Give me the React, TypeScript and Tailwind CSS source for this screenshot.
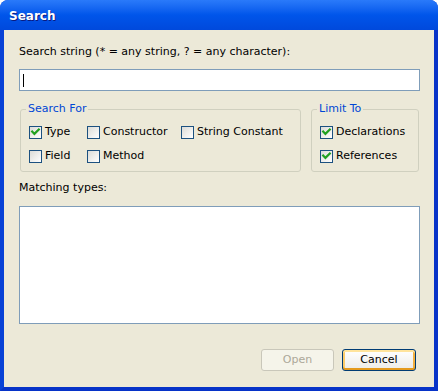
import React from "react";

const F = "font-['DejaVu_Sans',sans-serif]";

function Box({ checked }: { checked?: boolean }) {
  return (
    <span className="w-[13px] h-[13px] border border-[#1C5180] bg-linear-to-br from-[#DCDCD7] to-white flex items-center justify-center shrink-0">
      {checked && (
        <svg width="11" height="11" viewBox="0 0 11 11">
          <polyline points="2.2,4.6 4.4,6.9 8.8,2.5" stroke="#21A121" strokeWidth="2.2" fill="none" strokeLinecap="square" />
        </svg>
      )}
    </span>
  );
}

function Check({ label, checked }: { label: string; checked?: boolean }) {
  return (
    <div className="flex items-center gap-[3px] h-[14px]">
      <Box checked={checked} />
      <span className="leading-[14px]">{label}</span>
    </div>
  );
}

export default function App() {
  return (
    <div className={`w-[438px] h-[391px] bg-white ${F} text-[11px] text-black`}>
      <div className="w-full h-full flex flex-col rounded-t-[8px] overflow-hidden bg-[#0842D6]">
        {/* Title bar */}
        <div className="h-[30px] shrink-0 flex items-center pl-[9px] pt-[1px] bg-linear-to-b from-[#2A7AFA] via-[#0055EA] to-[#0049DC]">
          <span className="text-white font-bold text-[12px] leading-[14px] [text-shadow:1px_1px_0_#0A1A80]">
            Search
          </span>
        </div>
        {/* Frame + body */}
        <div className="flex-1 flex border-l-[4px] border-r-[5px] border-b-[4px] border-l-[#0842D6] border-r-[#0733C8] border-b-[#0733C8]">
          <div className="flex-1 flex flex-col bg-[#ECE9D8] pl-[15px] pr-[14px]">
            <div className="mt-[15px] leading-[14px]">Search string (* = any string, ? = any character):</div>
            <div className="mt-[10px] h-[22px] border border-[#7F9DB9] bg-white flex items-center pl-[3px]">
              <span className="w-[1px] h-[13px] bg-black" />
            </div>

            <div className="mt-[11px] flex gap-[10px] pl-[1px] pr-[1px]">
              <fieldset className="w-[281px] border border-[#D0D0BF] rounded-[3px] px-[8px] pt-[9px] pb-[8px]">
                <legend className="ml-[-3px] px-[2px] leading-[14px] text-[#0046D5]">Search For</legend>
                <div className="flex flex-col gap-[10px]">
                  <div className="flex">
                    <div className="w-[58px]"><Check label="Type" checked /></div>
                    <div className="w-[94px]"><Check label="Constructor" /></div>
                    <div><Check label="String Constant" /></div>
                  </div>
                  <div className="flex">
                    <div className="w-[58px]"><Check label="Field" /></div>
                    <div className="w-[94px]"><Check label="Method" /></div>
                  </div>
                </div>
              </fieldset>
              <fieldset className="w-[108px] border border-[#D0D0BF] rounded-[3px] px-[8px] pt-[9px] pb-[8px]">
                <legend className="ml-[-3px] px-[2px] leading-[14px] text-[#0046D5]">Limit To</legend>
                <div className="flex flex-col gap-[10px]">
                  <Check label="Declarations" checked />
                  <Check label="References" checked />
                </div>
              </fieldset>
            </div>

            <div className="mt-[9px] leading-[14px]">Matching types:</div>
            <div className="mt-[11px] h-[118px] border border-[#7F9DB9] bg-white" />

            <div className="mt-[25px] flex justify-end gap-[8px] pr-[4px]">
              <div className="w-[73px] h-[22px] rounded-[3px] border border-[#C9C7BA] bg-[#F5F4EA] text-[#ACA899] flex items-center justify-center">
                Open
              </div>
              <div className="w-[74px] h-[22px] rounded-[3px] border border-[#003C74] bg-linear-to-b from-white to-[#ECEBE6] flex items-center justify-center shadow-[inset_0_2px_0_#FFE49C,inset_0_-2px_0_#E59A1C,inset_2px_0_0_#FBCB6A,inset_-2px_0_0_#F2B040]">
                Cancel
              </div>
            </div>
          </div>
        </div>
      </div>
    </div>
  );
}
